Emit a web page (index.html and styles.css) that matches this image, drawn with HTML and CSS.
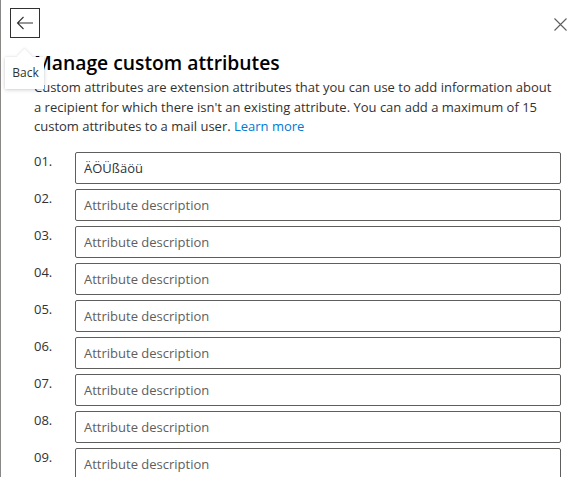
FILE: index.html
```html
<!DOCTYPE html>
<html lang="en">
<head>
<meta charset="utf-8">
<title>Manage custom attributes</title>
<link rel="stylesheet" href="styles.css">
</head>
<body>
<div class="panel">
  <div class="topbar">
    <button class="back-btn" aria-label="Back">
      <svg width="18" height="14" viewBox="0 0 18 14"><path d="M17 7H1.5M7.5 1L1.5 7l6 6" fill="none" stroke="#323130" stroke-width="1.1"/></svg>
    </button>
    <div class="tooltip">Back</div>
    <button class="close-btn" aria-label="Close">
      <svg width="13" height="13" viewBox="0 0 13 13"><path d="M0.5 0.5l12 12M12.5 0.5l-12 12" fill="none" stroke="#605e5c" stroke-width="1.1"/></svg>
    </button>
  </div>
  <div class="content">
    <h1 class="title">Manage custom attributes</h1>
    <p class="desc">Custom attributes are extension attributes that you can use to add information about a recipient for which there isn't an existing attribute. You can add a maximum of 15 custom attributes to a mail user. <a href="#" class="link">Learn more</a></p>
    <div class="rows">
      <div class="row"><span class="num">01.</span><input class="field" type="text" value="ÄÖÜßäöü" placeholder="Attribute description"></div>
      <div class="row"><span class="num">02.</span><input class="field" type="text" placeholder="Attribute description"></div>
      <div class="row"><span class="num">03.</span><input class="field" type="text" placeholder="Attribute description"></div>
      <div class="row"><span class="num">04.</span><input class="field" type="text" placeholder="Attribute description"></div>
      <div class="row"><span class="num">05.</span><input class="field" type="text" placeholder="Attribute description"></div>
      <div class="row"><span class="num">06.</span><input class="field" type="text" placeholder="Attribute description"></div>
      <div class="row"><span class="num">07.</span><input class="field" type="text" placeholder="Attribute description"></div>
      <div class="row"><span class="num">08.</span><input class="field" type="text" placeholder="Attribute description"></div>
      <div class="row"><span class="num">09.</span><input class="field" type="text" placeholder="Attribute description"></div>
    </div>
  </div>
</div>
</body>
</html>
```
FILE: styles.css
```css
html, body {
  margin: 0;
  padding: 0;
  background: #ffffff;
  overflow: hidden;
}
body {
  font-family: "Open Sans", "Noto Sans", "Liberation Sans", sans-serif;
  color: #323130;
  height: 477px;
  border-left: 1px solid #8a8886;
  box-sizing: border-box;
}
.panel {
  position: relative;
  height: 100%;
}
.topbar {
  position: relative;
  display: flex;
  justify-content: space-between;
  align-items: flex-start;
  padding: 8px 9px 0 9px;
  height: 40px;
  box-sizing: border-box;
}
.back-btn {
  width: 30px;
  height: 30px;
  border: 1px solid #323130;
  background: #fff;
  padding: 0;
  display: flex;
  align-items: center;
  justify-content: center;
  cursor: pointer;
}
.close-btn {
  width: 30px;
  height: 30px;
  border: none;
  background: transparent;
  padding: 0;
  margin-top: 1px;
  display: flex;
  align-items: center;
  justify-content: center;
}
.tooltip {
  position: absolute;
  left: 4px;
  top: 57px;
  width: 39px;
  height: 32px;
  padding-left: 2px;
  box-sizing: border-box;
  background: #fff;
  box-shadow: 0 1px 4px rgba(0,0,0,0.18), 0 0 1px rgba(0,0,0,0.12);
  font-size: 12px;
  line-height: 32px;
  text-align: center;
  color: #323130;
  z-index: 5;
}
.tooltip::before {
  content: "";
  position: absolute;
  left: 14px;
  top: -6px;
  width: 11px;
  height: 11px;
  background: #fff;
  transform: rotate(45deg);
  box-shadow: -1px -1px 2px rgba(0,0,0,0.08);
}
.content {
  padding: 9px 23px 0 33px;
}
.title {
  margin: 0;
  font-size: 19.3px;
  font-weight: 600;
  line-height: 28px;
  color: #000;
}
.desc {
  margin: 1px 0 0 0;
  font-size: 13px;
  line-height: 19.5px;
  color: #323130;
}
.link {
  color: #0078d4;
  text-decoration: none;
}
.rows {
  margin-top: 15px;
  display: flex;
  flex-direction: column;
  gap: 5px;
}
.row {
  display: flex;
  align-items: flex-start;
}
.num {
  width: 41px;
  flex: none;
  font-size: 13px;
  line-height: 18px;
  padding-top: 0;
  color: #323130;
}
.field {
  flex: 1;
  height: 32px;
  box-sizing: border-box;
  border: 1px solid #605e5c;
  border-radius: 2px;
  padding: 0 8px;
  font-family: inherit;
  font-size: 13px;
  color: #323130;
  background: #fff;
  outline: none;
}
.field::placeholder {
  color: #605e5c;
}
```
